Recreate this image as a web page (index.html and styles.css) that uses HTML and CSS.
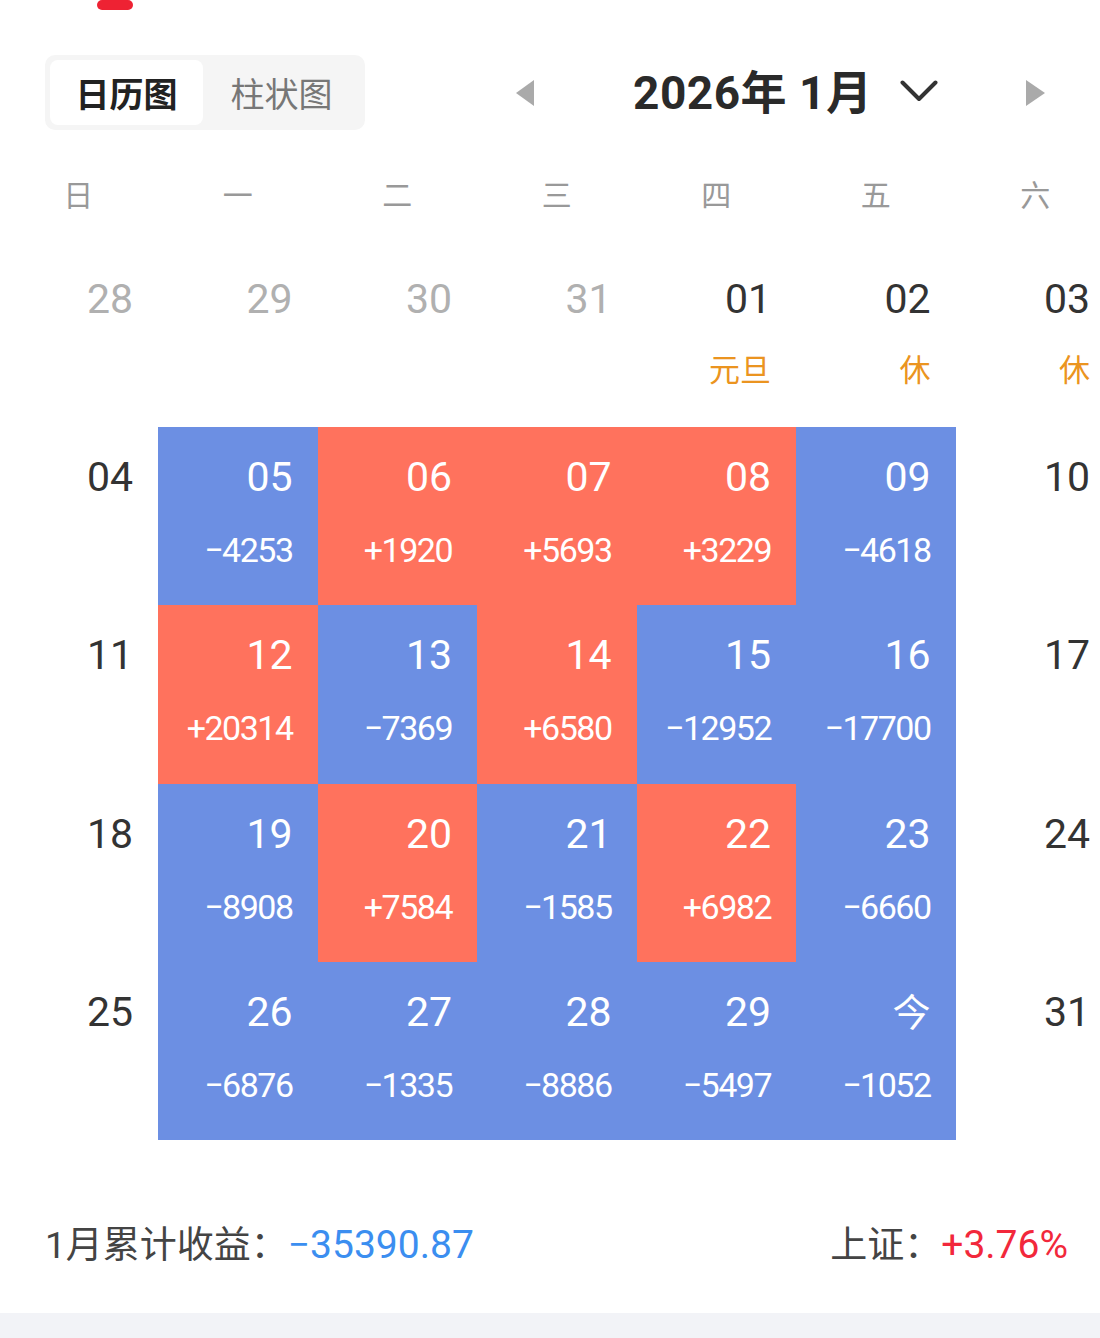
FILE: index.html
```html
<!DOCTYPE html>
<html lang="zh-CN">
<head>
<meta charset="utf-8">
<title>日历图</title>
<link rel="stylesheet" href="styles.css">
</head>
<body>
<div class="page">
  <div class="topbar"><span class="indicator"></span></div>
  <div class="header">
    <div class="tabs">
      <div class="tab active">日历图</div>
      <div class="tab">柱状图</div>
    </div>
    <span class="arrow left"></span>
    <div class="title">2026年 1月</div>
    <svg class="chevron" width="38" height="22" viewBox="0 0 38 22"><polyline points="2.5,2.5 19,19 35.5,2.5" fill="none" stroke="#333" stroke-width="4" stroke-linecap="round" stroke-linejoin="round"/></svg>
    <span class="arrow right"></span>
  </div>
  <div class="weekdays">
    <div>日</div><div>一</div><div>二</div><div>三</div><div>四</div><div>五</div><div>六</div>
  </div>
  <div class="calendar">
    <div class="day prev"><div class="num">28</div></div>
    <div class="day prev"><div class="num">29</div></div>
    <div class="day prev"><div class="num">30</div></div>
    <div class="day prev"><div class="num">31</div></div>
    <div class="day"><div class="num">01</div><div class="holiday">元旦</div></div>
    <div class="day"><div class="num">02</div><div class="holiday">休</div></div>
    <div class="day"><div class="num">03</div><div class="holiday">休</div></div>

    <div class="day"><div class="num">04</div></div>
    <div class="day down"><div class="num">05</div><div class="val">−4253</div></div>
    <div class="day up"><div class="num">06</div><div class="val">+1920</div></div>
    <div class="day up"><div class="num">07</div><div class="val">+5693</div></div>
    <div class="day up"><div class="num">08</div><div class="val">+3229</div></div>
    <div class="day down"><div class="num">09</div><div class="val">−4618</div></div>
    <div class="day"><div class="num">10</div></div>

    <div class="day"><div class="num">11</div></div>
    <div class="day up"><div class="num">12</div><div class="val">+20314</div></div>
    <div class="day down"><div class="num">13</div><div class="val">−7369</div></div>
    <div class="day up"><div class="num">14</div><div class="val">+6580</div></div>
    <div class="day down"><div class="num">15</div><div class="val">−12952</div></div>
    <div class="day down"><div class="num">16</div><div class="val">−17700</div></div>
    <div class="day"><div class="num">17</div></div>

    <div class="day"><div class="num">18</div></div>
    <div class="day down"><div class="num">19</div><div class="val">−8908</div></div>
    <div class="day up"><div class="num">20</div><div class="val">+7584</div></div>
    <div class="day down"><div class="num">21</div><div class="val">−1585</div></div>
    <div class="day up"><div class="num">22</div><div class="val">+6982</div></div>
    <div class="day down"><div class="num">23</div><div class="val">−6660</div></div>
    <div class="day"><div class="num">24</div></div>

    <div class="day"><div class="num">25</div></div>
    <div class="day down"><div class="num">26</div><div class="val">−6876</div></div>
    <div class="day down"><div class="num">27</div><div class="val">−1335</div></div>
    <div class="day down"><div class="num">28</div><div class="val">−8886</div></div>
    <div class="day down"><div class="num">29</div><div class="val">−5497</div></div>
    <div class="day down"><div class="num today">今</div><div class="val">−1052</div></div>
    <div class="day"><div class="num">31</div></div>
  </div>
  <div class="summary">
    <div class="sum-left">1月累计收益：<span class="neg">−35390.87</span></div>
    <div class="sum-right">上证：<span class="pos">+3.76%</span></div>
  </div>
  <div class="footer-band"></div>
</div>
</body>
</html>
```
FILE: styles.css
```css
html, body {
  margin: 0;
  padding: 0;
  overflow: hidden;
  background: #ffffff;
}
body {
  font-family: Roboto, "Noto Sans CJK SC", sans-serif;
  color: #333333;
}
.page {
  width: 1100px;
  height: 1338px;
  overflow: hidden;
  display: flex;
  flex-direction: column;
}
.topbar {
  height: 10px;
  padding-left: 97px;
}
.indicator {
  display: block;
  width: 36px;
  height: 10px;
  background: #ee2233;
  border-radius: 5px;
}
.header {
  margin-top: 45px;
  height: 75px;
  display: flex;
  align-items: center;
}
.tabs {
  margin-left: 45px;
  width: 320px;
  height: 75px;
  box-sizing: border-box;
  padding: 5px;
  background: #f5f5f5;
  border-radius: 10px;
  display: flex;
}
.tab {
  display: flex;
  align-items: center;
  justify-content: center;
  font-family: "Noto Sans CJK SC", sans-serif;
  font-size: 34px;
  color: #777777;
  flex: 1 1 0;
}
.tab.active {
  flex: 0 0 153px;
  background: #ffffff;
  border-radius: 8px;
  color: #222222;
  font-weight: 700;
}
.arrow {
  width: 0;
  height: 0;
  border-top: 13px solid transparent;
  border-bottom: 13px solid transparent;
}
.arrow.left {
  margin-left: 151px;
  border-right: 18px solid #aaaaaa;
}
.arrow.right {
  margin-left: 88px;
  border-left: 19px solid #aaaaaa;
}
.title {
  margin-left: 99px;
  padding-bottom: 8px;
  font-size: 46px;
  font-weight: 700;
  color: #2a2a2a;
  white-space: nowrap;
  letter-spacing: 0.5px;
}
.chevron {
  margin-left: 28px;
  margin-bottom: 3px;
  display: block;
}
.weekdays {
  height: 119px;
  box-sizing: border-box;
  padding-top: 8px;
  margin-left: -1.5px;
  display: grid;
  grid-template-columns: repeat(7, 159.5px);
  align-items: center;
  font-family: "Noto Sans CJK SC", sans-serif;
  font-size: 30px;
  color: #999999;
  text-align: center;
}
.calendar {
  margin-left: -1.5px;
  display: grid;
  grid-template-columns: repeat(7, 159.5px);
  grid-auto-rows: 178.3px;
  flex: 0 0 auto;
}
.day {
  box-sizing: border-box;
  padding: 30px 25px 0 0;
  text-align: right;
  color: #333333;
}
.day.prev {
  color: #b0b0b0;
}
.day.up {
  background: #ff725d;
  color: #ffffff;
}
.day.down {
  background: #6c8fe3;
  color: #ffffff;
}
.num {
  font-size: 41px;
  line-height: 41px;
  height: 41px;
}
.num.today {
  font-family: "Noto Sans CJK SC", sans-serif;
  font-size: 38px;
  line-height: 36px;
}
.val {
  margin-top: 35px;
  font-size: 34px;
  line-height: 34px;
  letter-spacing: -1.5px;
}
.holiday {
  margin-top: 32px;
  font-family: "Noto Sans CJK SC", sans-serif;
  font-size: 31px;
  line-height: 32px;
  color: #eb9420;
}
.summary {
  height: 173px;
  box-sizing: border-box;
  padding: 85px 32px 0 45px;
  display: flex;
  justify-content: space-between;
  align-items: flex-start;
  font-size: 37px;
  line-height: 40px;
  color: #444444;
}
.neg {
  color: #3b8ef0;
  font-size: 39px;
}
.pos {
  color: #f2283b;
  font-size: 39px;
}
.footer-band {
  height: 25px;
  background: #f2f3f7;
}
```
